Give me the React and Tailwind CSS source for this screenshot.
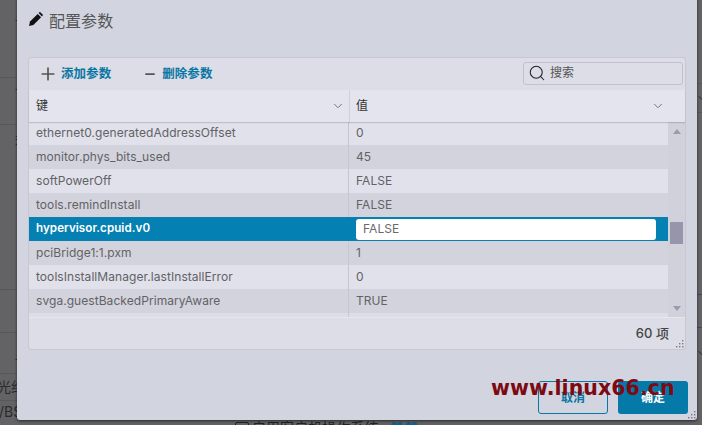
import { Plus, Minus, Search, ChevronDown } from "lucide-react";

const rows = [
  ["ethernet0.generatedAddressOffset", "0"],
  ["monitor.phys_bits_used", "45"],
  ["softPowerOff", "FALSE"],
  ["tools.remindInstall", "FALSE"],
  ["hypervisor.cpuid.v0", "FALSE"],
  ["pciBridge1:1.pxm", "1"],
  ["toolsInstallManager.lastInstallError", "0"],
  ["svga.guestBackedPrimaryAware", "TRUE"],
];

const font = { fontFamily: '"Inter", "Noto Sans CJK SC", sans-serif' };

function PencilIcon() {
  return (
    <svg className="mb-[4px]" width="14" height="14" viewBox="0 0 14 14" fill="#111">
      <path d="M0 14 L1 9.6 L8.7 1.9 L12.1 5.3 L4.4 13 Z" />
      <path d="M9.6 1 L10.4 .3 Q11 -.1 11.6 .4 L13.6 2.4 Q14.1 3 13.7 3.6 L13 4.4 Z" />
    </svg>
  );
}

function ResizeDots({ className }) {
  return (
    <svg className={className} width="9" height="9" viewBox="0 0 9 9" fill="#77798a">
      <rect x="7" y="1" width="1.4" height="1.4" />
      <rect x="4" y="4" width="1.4" height="1.4" />
      <rect x="7" y="4" width="1.4" height="1.4" />
      <rect x="1" y="7" width="1.4" height="1.4" />
      <rect x="4" y="7" width="1.4" height="1.4" />
      <rect x="7" y="7" width="1.4" height="1.4" />
    </svg>
  );
}

function Row({ name, value, index }) {
  if (name === "hypervisor.cpuid.v0") {
    return (
      <div className="flex h-6 items-center bg-[#0580b3] text-white">
        <div className="w-[320px] pl-[7px] text-[11.6px] font-semibold">{name}</div>
        <div className="flex flex-1 pl-[7px] pr-[12px]">
          <div className="flex h-[21px] flex-1 items-center rounded-[3px] bg-white pl-[7px] text-[#6a6a6e]">{value}</div>
        </div>
      </div>
    );
  }
  const bg = index % 2 === 0 ? "bg-[#e0e1ea]" : "bg-[#d2d3dc]";
  return (
    <div className={`flex h-6 items-center text-[#626266] ${bg}`}>
      <div className="h-full w-[320px] border-r border-[#c6c7d0] pl-[7px] leading-6">{name}</div>
      <div className="pl-[7px]">{value}</div>
    </div>
  );
}

export default function App() {
  return (
    <div className="relative h-[425px] w-[702px] overflow-hidden bg-[#636365] text-[12px] tracking-[0.06px]" style={font}>
      {/* page behind the modal */}
      <div className="flex h-full text-[#2b2b2b]">
        <div className="flex flex-1 flex-col text-[14px]">
          <div className="h-[78px] border-b border-[#585858] pl-[15px] pt-[11px]">设</div>
          <div className="h-[47px] border-b border-[#585858] pl-[15px] pt-[2px]">设</div>
          <div className="h-[165px] border-b border-[#585858] pl-[15px] pt-[5px]">若</div>
          <div className="h-[43px] border-b border-[#585858] pl-[15px] pt-[8px]">自</div>
          <div className="h-[41px] border-b border-[#585858] pl-[15px] pt-[10px]">显</div>
          <div className="h-[27px] border-b border-[#585858] pt-[2px]">
            <span className="ml-[-3px]">光纤</span>
          </div>
          <div className="flex min-h-0 flex-1 items-start overflow-hidden">
            <span className="ml-[-1px] w-[236px] shrink-0">/BS</span>
            <span className="mt-[16px] flex shrink-0 items-center gap-[3px] text-[#222]">
              <span className="h-[12px] w-[14px] rounded-[2px] border border-[#222]" />
              启用客户机操作系统
              <span className="ml-[8px] text-[#1d5d8a]">♥♥</span>
            </span>
          </div>
        </div>
        <div className="flex w-[6px] flex-col">
          <div className="h-[84px] border-b border-[#585858]" />
          <div className="flex h-[29px] items-center border-b border-[#585858]">
            <ChevronDown size={12} className="shrink-0 text-[#222]" />
          </div>
          <div className="h-[182px] border-b border-[#2f4f63]" />
          <div className="h-[33px] border-b border-[#2f4f63]" />
          <div className="flex h-[50px] items-center">
            <ChevronDown size={12} className="shrink-0 text-[#222]" />
          </div>
        </div>
      </div>

      {/* modal */}
      <div className="absolute left-[17px] top-[-10px] flex h-[430px] w-[680px] flex-col rounded-b-[3px] bg-[#d2d4df] px-[12px] shadow-[0_1px_3px_rgba(0,0,0,0.6)]">
        <div className="h-[68px] pt-[19px]">
          <div className="flex h-6 items-center gap-[6px] text-[16px] leading-6 text-[#555]">
            <PencilIcon />
            <span>配置参数</span>
          </div>
        </div>

        <div className="relative h-[291px] w-[656px] rounded-[3px] bg-[#dcdde7] shadow-[0_0_1px_1px_#c6c7d3]">
          <div className="flex h-[32px] items-center">
            <Plus size={20} className="ml-[9px] text-[#555]" />
            <span className="ml-[3px] text-[12.5px] font-semibold text-[#0a76a3]">添加参数</span>
            <Minus size={14} strokeWidth={3} className="ml-[32px] text-[#555]" />
            <span className="ml-[5px] text-[12.5px] font-semibold text-[#0a76a3]">删除参数</span>
            <div className="mb-[2px] ml-auto mr-[2px] flex h-[23px] w-[160px] items-center rounded-[3px] border border-[#c0c1cc] pl-[4px] text-[#555]">
              <Search size={18} strokeWidth={1.4} className="text-[#222]" />
              <span className="ml-[4px] text-[12px]">搜索</span>
            </div>
          </div>

          <div className="relative flex h-[32px] items-center bg-[#e3e4ed] text-[#333] shadow-[0_1px_1px_rgba(0,0,0,0.15)]">
            <div className="flex h-full w-[320px] items-center justify-between pl-[7px] pr-[4px]">
              <span>键</span>
              <ChevronDown size={14} strokeWidth={1.5} className="text-[#666]" />
            </div>
            <div className="flex h-full flex-1 items-center justify-between border-l border-[#cfd0da] pl-[6px] pr-[20px]">
              <span>值</span>
              <ChevronDown size={14} strokeWidth={1.5} className="text-[#666]" />
            </div>
          </div>

          <div className="flex h-[195px]">
            <div className="flex w-[639px] flex-col overflow-hidden">
              <div className="mt-[-1px]">
                {rows.map((r, i) => (
                  <Row key={r[0]} name={r[0]} value={r[1]} index={i} />
                ))}
              </div>
              <div className="w-[320px] flex-1 border-r border-[#c6c7d0]" />
            </div>
            <div className="flex flex-1 flex-col items-center bg-[#d0d1db] pt-[7px]">
              <div className="h-0 w-0 border-x-[4px] border-b-[5px] border-x-transparent border-b-[#9a9bae]" />
              <div className="mt-[88px] h-[22px] w-[13px] shrink-0 bg-[#9596ab]" />
              <div className="mt-[62px] h-0 w-0 border-x-[4px] border-t-[5px] border-x-transparent border-t-[#9a9bae]" />
            </div>
          </div>

          <div className="flex h-[32px] items-center justify-end border-t border-[#e6e7ee] pr-[16px] text-[#444]">
            <span className="text-[13px] font-medium">60 项</span>
          </div>
          <ResizeDots className="absolute bottom-[1px] right-[1px]" />
        </div>

        <div className="flex flex-1 items-start justify-end gap-[10px] pt-[32px]">
          <button className="h-[33px] w-[70px] rounded-[3px] border border-[#0a76a3] text-[12px] font-semibold text-[#0a76a3]">取消</button>
          <button className="mr-[-3px] h-[33px] w-[70px] rounded-[3px] bg-[#0579a8] text-[12px] font-semibold text-white">确定</button>
        </div>
        <ResizeDots className="absolute bottom-[1px] right-[1px]" />
      </div>

      {/* watermark stamped on the screenshot */}
      <div
        className="absolute left-[491px] top-[375px] text-[20.5px] font-bold leading-[26px] text-[#7d0a12]"
        style={{ fontFamily: '"DejaVu Sans", sans-serif' }}
      >
        www.linux66.cn
      </div>
    </div>
  );
}
